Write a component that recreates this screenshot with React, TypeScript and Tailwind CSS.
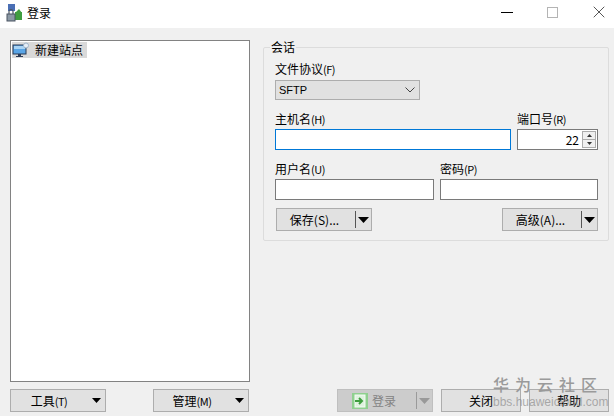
import React from 'react';
import { X } from 'lucide-react';

const AppIcon = () => (
  <svg width="18" height="18" viewBox="0 0 18 18" className="shrink-0">
    <rect x="2" y="0" width="7" height="7" fill="#4a6fb5" />
    <rect x="9" y="8" width="7" height="8" fill="#3f9e3f" />
    <path d="M13 5l3 4H9z" fill="#3f9e3f" />
    <rect x="1" y="10" width="8" height="7" fill="#8c99a5" stroke="#4b5563" />
    <path d="M3 10V7.5a2 2 0 0 1 4 0V10" fill="none" stroke="#4b5563" strokeWidth="1.2" />
  </svg>
);

const SiteIcon = () => (
  <svg width="18" height="16" viewBox="0 0 18 16" className="shrink-0">
    <rect x="1" y="3" width="13" height="9" fill="#5aa5e6" stroke="#2b3a55" />
    <rect x="2" y="4" width="11" height="3" fill="#a9d4f5" />
    <rect x="6" y="12" width="3" height="2" fill="#2b3a55" />
    <rect x="4" y="14" width="7" height="1" fill="#2b3a55" />
    <circle cx="14" cy="3.5" r="2.5" fill="#e6eef6" stroke="#9fb4c9" />
  </svg>
);

const LoginIcon = () => (
  <svg width="16" height="16" viewBox="0 0 16 16" className="shrink-0">
    <rect x="0" y="0" width="16" height="16" fill="#8fd08f" />
    <rect x="3" y="2" width="10" height="12" fill="#dff2df" stroke="#f4fbf4" />
    <path d="M3 8h6M7 5l3 3-3 3" fill="none" stroke="#3f9e3f" strokeWidth="2" />
  </svg>
);

const Caret = ({ color = '#000', width = 11, height = 6 }: { color?: string; width?: number; height?: number }) => (
  <svg width={width} height={height} viewBox="0 0 11 6">
    <path d="M0 0h11L5.5 6z" fill={color} />
  </svg>
);

const Field = ({ label, hint, className, children }: { label: string; hint: string; className: string; children?: React.ReactNode }) => (
  <div className={`flex flex-col ${className}`}>
    <label className="h-[20px] leading-[20px]">
      {label}
      <span className="text-[11px] tracking-[-0.5px]">({hint})</span>
    </label>
    {children}
  </div>
);

const TextBox = ({ focused }: { focused?: boolean }) => (
  <input
    type="text"
    className={`block w-full h-[21px] bg-white border outline-none ${focused ? 'border-[#0078d7]' : 'border-[#7a7a7a]'}`}
  />
);

const Spinner = () => (
  <div className="flex items-center h-[21px] bg-white border border-[#7a7a7a] pl-1 pr-[1px]">
    <span className="flex-1 text-right pr-[3px] leading-none">22</span>
    <div className="flex flex-col w-[14px] h-[17px] border border-[#acacac] bg-[#f0f0f0]">
      <div className="flex-1 flex items-center justify-center border-b border-[#acacac]">
        <svg width="5" height="3" viewBox="0 0 5 3"><path d="M2.5 0L5 3H0z" fill="#333" /></svg>
      </div>
      <div className="flex-1 flex items-center justify-center">
        <svg width="5" height="3" viewBox="0 0 5 3"><path d="M0 0h5L2.5 3z" fill="#333" /></svg>
      </div>
    </div>
  </div>
);

const SplitButton = ({ label, hint, className }: { label: string; hint: string; className: string }) => (
  <button className={`relative flex items-center h-[23px] bg-[#e1e1e1] border border-[#adadad] ${className}`}>
    <span className="flex-1 text-center pr-[19px] whitespace-nowrap">
      {label}
      <span className="text-[12px]">({hint})...</span>
    </span>
    <span className="absolute right-[15px] top-[2px] bottom-[2px] w-[1px] bg-[#555]" />
    <span className="absolute right-[2px] top-[8px] flex"><Caret /></span>
  </button>
);

const MenuButton = ({ label, hint }: { label: string; hint: string }) => (
  <button className="relative flex items-center justify-center h-[23px] w-[96px] bg-[#e1e1e1] border border-[#adadad]">
    <span className="pr-[18px] whitespace-nowrap">
      {label}
      <span className="text-[11px] tracking-[-0.5px]">({hint})</span>
    </span>
    <span className="absolute right-[4px] top-[8px] flex"><Caret width={9} height={5} /></span>
  </button>
);

const App: React.FC = () => {
  return (
    <div className="relative w-[614px] h-[416px] overflow-hidden flex flex-col bg-[#f0f0f0] text-[12px] text-black">
      <div className="flex items-center h-[28px] bg-white font-['Noto_Sans_CJK_SC',sans-serif] pl-[6px] pb-[2px]">
        <AppIcon />
        <span className="ml-[3px] flex-1">登录</span>
        <div className="flex items-center mb-[2px]">
          <div className="w-[12px] h-[1px] bg-black mr-[34px]" />
          <div className="w-[11px] h-[11px] border border-[#b4b4b4] mr-[31px]" />
          <X size={20} strokeWidth={0.8} className="mr-[5px]" />
        </div>
      </div>

      <div className="flex-1 flex flex-col font-['Noto_Sans_CJK_SC',sans-serif] pl-[10px] pr-[5px] pt-[12px] pb-[4px]">
        <div className="flex-1 flex">
          <div className="w-[240px] h-[342px] bg-white border border-[#828282] pl-[1px] pt-[1px]">
            <div className="flex items-center h-[16px] w-[75px] bg-[#d9d9d9]">
              <SiteIcon />
              <span className="ml-[5px] whitespace-nowrap">新建站点</span>
            </div>
          </div>

          <fieldset className="ml-[13px] w-[346px] h-[201px] border border-[#dcdcdc] rounded-[2px] pl-[11px] pr-[10px] pt-[5px]">
            <legend className="ml-[-5px] px-[1px] leading-[14px]">会话</legend>
            <Field label="文件协议" hint="F" className="w-[145px]">
              <div className="flex items-center justify-between h-[20px] mt-[1px] bg-[#e1e1e1] border border-[#adadad] pl-[3px] pr-[4px] font-['Liberation_Sans',sans-serif] text-[11px]">
                SFTP
                <svg width="10" height="6" viewBox="0 0 10 6" className="shrink-0">
                  <path d="M0.5 0.5L5 5l4.5-4.5" fill="none" stroke="#444" />
                </svg>
              </div>
            </Field>
            <div className="flex gap-[6px] mt-[9px]">
              <Field label="主机名" hint="H" className="w-[236px]">
                <TextBox focused />
              </Field>
              <Field label="端口号" hint="R" className="w-[81px]">
                <Spinner />
              </Field>
            </div>
            <div className="flex gap-[6px] mt-[9px]">
              <Field label="用户名" hint="U" className="w-[159px]">
                <TextBox />
              </Field>
              <Field label="密码" hint="P" className="w-[158px]">
                <TextBox />
              </Field>
            </div>
            <div className="flex justify-between mt-[8px] pl-[1px]">
              <SplitButton label="保存" hint="S" className="w-[96px]" />
              <SplitButton label="高级" hint="A" className="w-[96px]" />
            </div>
          </fieldset>
        </div>

        <div className="flex items-center h-[23px]">
          <MenuButton label="工具" hint="T" />
          <div className="ml-[47px]">
            <MenuButton label="管理" hint="M" />
          </div>
          <button className="relative ml-[88px] flex items-center h-[23px] w-[96px] bg-[#cccccc] border border-[#bfbfbf] text-[#838383]">
            <span className="ml-[14px]"><LoginIcon /></span>
            <span className="ml-[4px]">登录</span>
            <span className="absolute right-[15px] top-[2px] bottom-[2px] w-[1px] bg-[#9a9a9a]" />
            <span className="absolute right-[2px] top-[8px] flex"><Caret color="#999" /></span>
          </button>
          <button className="ml-[8px] h-[23px] w-[80px] bg-[#e1e1e1] border border-[#adadad]">关闭</button>
          <button className="ml-[8px] h-[23px] w-[80px] bg-[#e1e1e1] border border-[#adadad]">帮助</button>
        </div>
      </div>

      <div className="absolute left-[493px] top-[375px] flex flex-col font-['Noto_Sans_CJK_SC',sans-serif] pointer-events-none">
        <span className="text-[16px] leading-[18px] tracking-[6px] font-medium text-[#9a9a9a] whitespace-nowrap">华为云社区</span>
        <span className="mt-[2px] font-['Liberation_Sans',sans-serif] text-[12px] leading-[14px] text-[#8c8c8c]/70 whitespace-nowrap">bbs.huaweicloud.com</span>
      </div>
    </div>
  );
};

export default App;
